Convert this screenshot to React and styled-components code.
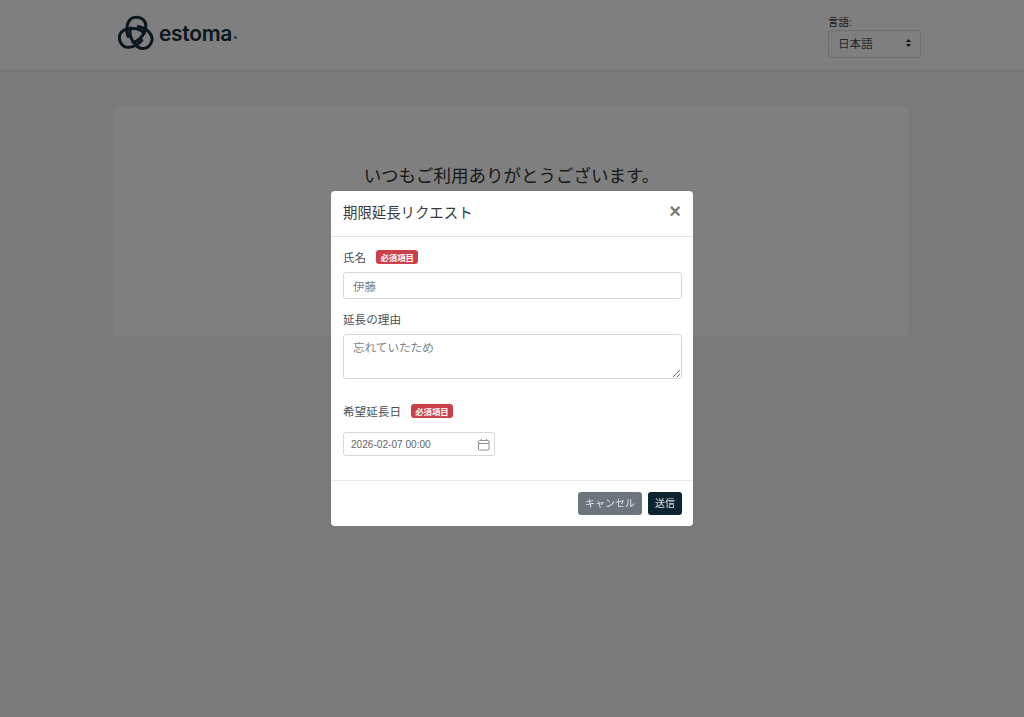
import React from 'react';
import styled, { createGlobalStyle } from 'styled-components';

const FONT = '"Liberation Sans", "Noto Sans CJK JP", sans-serif';

const GlobalStyle = createGlobalStyle`
  html, body {
    margin: 0;
    height: 100%;
    background: #f4f4f4;
    font-family: ${FONT};
  }
  * { box-sizing: border-box; }
`;

const Page = styled.div`
  min-height: 717px;
`;

const Header = styled.header`
  height: 70px;
  background: #fff;
  border-bottom: 1px solid #f4f4f4;
  padding: 0 103px 0 118px;
  display: flex;
  justify-content: space-between;
`;

const Logo = styled.div`
  display: flex;
  align-items: center;
  gap: 5px;
  height: 66px;
`;

const LogoText = styled.span`
  font-family: Inter, sans-serif;
  font-weight: 600;
  font-size: 21px;
  letter-spacing: -0.3px;
  color: #14303b;
`;

const LogoMark = styled.span`
  width: 3px;
  height: 3px;
  margin-left: -3px;
  margin-top: 9px;
  border-radius: 50%;
  background: #5a7a7c;
`;

const LangBox = styled.div`
  width: 93px;
  padding-top: 15px;
`;

const LangLabel = styled.div`
  font-size: 10.5px;
  line-height: 14px;
  color: #333;
  margin-bottom: 1px;
`;

const LangSelect = styled.div`
  height: 28px;
  border: 1px solid #dcdcdc;
  border-radius: 3px;
  background: #fff;
  padding: 0 9px 2px 9px;
  display: flex;
  align-items: center;
  justify-content: space-between;
  font-size: 11.6px;
  color: #495057;
`;

const Main = styled.main`
  padding: 36px 115px 0 114px;
`;

const Jumbotron = styled.section`
  height: 230px;
  background: #fff;
  border-radius: 5px;
  padding-top: 58px;
  text-align: center;
  font-size: 17.5px;
  line-height: 24px;
  color: #333;
`;

const Backdrop = styled.div`
  position: fixed;
  inset: 0;
  background: rgba(0, 0, 0, 0.5);
  display: flex;
  align-items: center;
  justify-content: center;
`;

const Modal = styled.div`
  width: 362px;
  height: 335px;
  background: #fff;
  border-radius: 4px;
  display: flex;
  flex-direction: column;
`;

const ModalHeader = styled.div`
  height: 46px;
  border-bottom: 1px solid #e4e6e8;
  padding: 0 12px 4px;
  display: flex;
  align-items: center;
  justify-content: space-between;
`;

const Title = styled.h5`
  margin: 0;
  font-size: 14.4px;
  font-weight: 400;
  color: #343a40;
`;

const Close = styled.span`
  font-size: 20px;
  font-weight: 700;
  line-height: 1;
  color: #7a7a7a;
  margin: -2px 0 0 0;
`;

const ModalBody = styled.div`
  flex: 1;
  padding: 11px 11px 0 12px;
`;

const LabelRow = styled.div`
  display: flex;
  align-items: center;
  gap: 10px;
  height: 18px;
  font-size: 11.6px;
  color: #495057;
  margin-bottom: ${(p) => p.$mb || 6}px;
`;

const Badge = styled.span`
  width: 42px;
  height: 14px;
  border-radius: 3px;
  background: #cb404b;
  color: #fff;
  font-size: 8.4px;
  font-weight: 700;
  display: flex;
  align-items: center;
  justify-content: center;
`;

const TextInput = styled.input`
  display: block;
  width: 100%;
  height: 27px;
  border: 1px solid #d5d8db;
  border-radius: 3px;
  padding: 0 9px;
  margin-bottom: 11px;
  font-family: ${FONT};
  font-size: 11.6px;
  color: #7b838a;
  outline: none;
`;

const TextArea = styled.textarea`
  display: block;
  width: 100%;
  height: 45px;
  border: 1px solid #d5d8db;
  border-radius: 3px;
  padding: 5px 9px;
  margin-bottom: 23px;
  font-family: ${FONT};
  font-size: 11.6px;
  line-height: 16px;
  color: #7b838a;
  outline: none;
`;

const DateField = styled.div`
  width: 152px;
  height: 24px;
  border: 1px solid #d5d8db;
  border-radius: 3px;
  padding: 0 4px 0 7px;
  display: flex;
  align-items: center;
  justify-content: space-between;
  font-size: 10.1px;
  color: #666;
`;

const ModalFooter = styled.div`
  height: 46px;
  border-top: 1px solid #e9ecef;
  padding: 0 11px 0 12px;
  display: flex;
  align-items: center;
  justify-content: flex-end;
  gap: 6px;
`;

const Button = styled.button`
  height: 23px;
  padding: 0 7px 2px;
  border: none;
  border-radius: 3px;
  font-family: ${FONT};
  font-size: 10px;
  color: #e2e4e6;
  background: ${(p) => (p.$dark ? '#0c2530' : '#6c757d')};
`;

// one of the three strands of the knot, the others are the same path rotated
const STRAND = 'M10 21.500C7 12 10 2.200 18 2.200C26 2.200 29.500 8.500 27 15C25.500 19.500 23 25.500 15 27.500';

function KnotLogo() {
  return (
    <svg width="36" height="36" viewBox="0 0 36 36" fill="none" stroke="#14303b" strokeWidth="3" strokeLinecap="round">
      {[0, 120, 240].map((angle) => (
        <path key={angle} d={STRAND} transform={`rotate(${angle} 18 19.500)`} />
      ))}
    </svg>
  );
}

function CalendarIcon() {
  return (
    <svg width="13" height="13" viewBox="0 0 13 13" fill="none" stroke="#8a8f94" strokeWidth="1">
      <rect x="1.500" y="2.500" width="10.500" height="9.500" rx="1" />
      <path d="M1.500 5.500H12M4 1V3M9.500 1V3" />
    </svg>
  );
}

function SelectArrows() {
  return (
    <svg width="5" height="8" viewBox="0 0 5 8" fill="#222">
      <path d="M2.500 0L5 3H0Z" />
      <path d="M2.500 8L0 5H5Z" />
    </svg>
  );
}

export default function App() {
  return (
    <>
      <GlobalStyle />
      <Page>
        <Header>
          <Logo>
            <KnotLogo />
            <LogoText>estoma</LogoText>
            <LogoMark />
          </Logo>
          <LangBox>
            <LangLabel>言語:</LangLabel>
            <LangSelect>
              日本語
              <SelectArrows />
            </LangSelect>
          </LangBox>
        </Header>
        <Main>
          <Jumbotron>いつもご利用ありがとうございます。</Jumbotron>
        </Main>
      </Page>
      <Backdrop>
        <Modal>
          <ModalHeader>
            <Title>期限延長リクエスト</Title>
            <Close>×</Close>
          </ModalHeader>
          <ModalBody>
            <LabelRow>
              氏名
              <Badge>必須項目</Badge>
            </LabelRow>
            <TextInput readOnly value="伊藤" />
            <LabelRow>延長の理由</LabelRow>
            <TextArea readOnly value="忘れていたため" />
            <LabelRow $mb={12}>
              希望延長日
              <Badge>必須項目</Badge>
            </LabelRow>
            <DateField>
              2026-02-07 00:00
              <CalendarIcon />
            </DateField>
          </ModalBody>
          <ModalFooter>
            <Button>キャンセル</Button>
            <Button $dark>送信</Button>
          </ModalFooter>
        </Modal>
      </Backdrop>
    </>
  );
}
